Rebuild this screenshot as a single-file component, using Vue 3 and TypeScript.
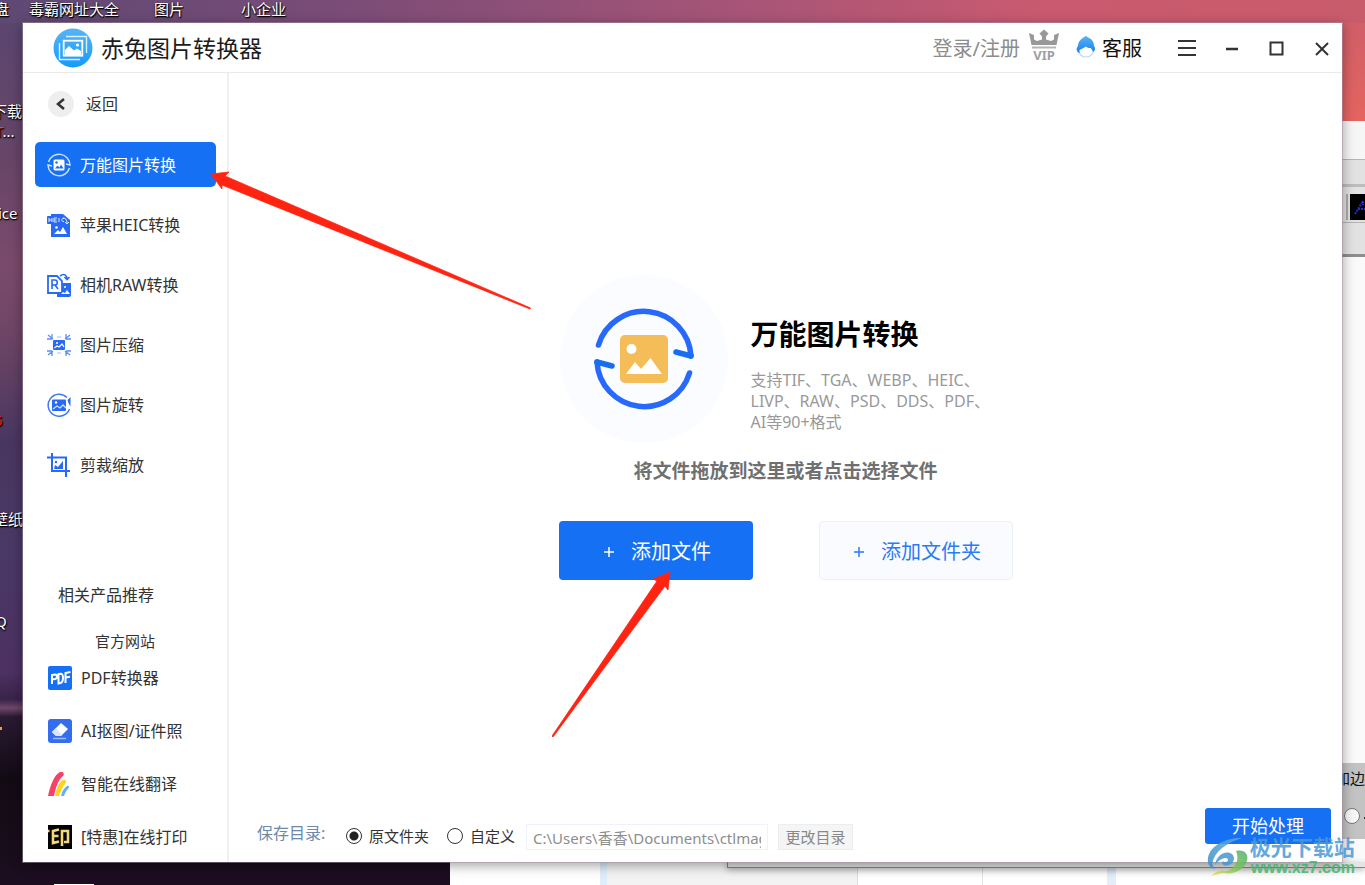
<script setup lang="ts">
import { ref } from 'vue'

interface Entry {
  id: string
  label: string
}

const tools: Entry[] = [
  { id: 'convert', label: '万能图片转换' },
  { id: 'heic', label: '苹果HEIC转换' },
  { id: 'raw', label: '相机RAW转换' },
  { id: 'compress', label: '图片压缩' },
  { id: 'rotate', label: '图片旋转' },
  { id: 'crop', label: '剪裁缩放' },
]

const products: Entry[] = [
  { id: 'pdf', label: 'PDF转换器' },
  { id: 'cutout', label: 'AI抠图/证件照' },
  { id: 'translate', label: '智能在线翻译' },
  { id: 'print', label: '[特惠]在线打印' },
]

const activeTool = ref('convert')
const saveMode = ref('source')
const savePath = ref('C:\\Users\\香香\\Documents\\ctlmage')
</script>

<template>
  <div class="desktop">
    <div class="backdrop" aria-hidden="true">
      <div class="rear-side">
        <div class="bar bar-title"></div>
        <div class="bar bar-menu"></div>
        <div class="bar bar-tools"><span class="swatch"><svg viewBox="0 0 15 26"><path d="M5 20 13 7M8 15h7M13 7v4" fill="none" stroke="#2a2ad0" stroke-width="2" stroke-dasharray="2 1" /></svg></span></div>
        <div class="bar bar-options"></div>
        <div class="rear-panel"><span class="rear-text">加边</span><span class="rear-radio"></span><span class="rear-dash"></span></div>
      </div>
      <div class="rear-bottom">
        <div class="rear-doc"></div>
        <div class="rear-dialog"></div>
        <div class="rear-edge"></div>
      </div>
      <span class="shortcut s1">盘</span>
      <span class="shortcut s2">毒霸网址大全</span>
      <span class="shortcut s3">图片</span>
      <span class="shortcut s4">小企业</span>
      <span class="shortcut s5">下载</span>
      <span class="shortcut s6"><b>T</b>...</span>
      <span class="shortcut s7">ice</span>
      <span class="shortcut s8">5</span>
      <span class="shortcut s9">壁纸</span>
      <span class="shortcut s10">Q</span>
      <span class="spark"></span>
      <span class="task-mark"></span>
    </div>

    <div class="window">
      <header class="titlebar">
        <svg class="logo" viewBox="0 0 40 40">
          <defs>
            <linearGradient id="logoFill" x1="0" y1="0" x2="0" y2="1">
              <stop offset="0" stop-color="#56b4f8" />
              <stop offset="1" stop-color="#149bfb" />
            </linearGradient>
          </defs>
          <circle cx="20" cy="20" r="19.5" fill="url(#logoFill)" />
          <path d="M13 8.500h20.500V25M6.500 15v16.500H27" fill="none" stroke="#d9f0ff" stroke-width="1.400" />
          <rect x="10.700" y="12.700" width="18.600" height="15" fill="none" stroke="#fff" stroke-width="1.800" />
          <path d="M12 22l4-4 5 4.500 3-2 4 2.500v4H12z" fill="#fff" />
          <circle cx="24.500" cy="17" r="1.600" fill="#fff" />
        </svg>
        <h1>赤兔图片转换器</h1>
        <div class="title-actions">
          <a href="#" class="login">登录/注册</a>
          <svg class="vip" viewBox="0 0 32 32">
            <path d="M1 4 6 6v4.500l3 1.500 5-1.500V7.500L11.500 4.500 16 .5l4.500 4L18 7.500v3l5 1.500 3-1.500V6l5-2-2.500 12h-25L1 4z" fill="#999" />
            <path d="M4 17.500h24v2H4z" fill="#b5b5b5" />
            <text x="16" y="31" text-anchor="middle" font-size="13" font-weight="700" fill="#a0a0a0">VIP</text>
          </svg>
          <a href="#" class="service">
            <svg viewBox="0 0 20 22">
              <defs>
                <linearGradient id="capFill" x1="0" y1="0" x2="0" y2="1">
                  <stop offset="0" stop-color="#55b4f0" />
                  <stop offset="1" stop-color="#1a80ee" />
                </linearGradient>
              </defs>
              <ellipse cx="10" cy="14" rx="7.500" ry="7" fill="#fff" stroke="#b9dcfa" stroke-width="1.200" />
              <path d="M10 0c1 1 2 1 3 2 3 1 5 4 5 8 2 2 1 5-1 6-.5-2-1.500-3-2.500-4-2 0-3.500-.5-4.500-1.500C8 12 5 13 3.500 14v3C0 16 0 12 2 10 2 5 6 2 10 0z" fill="url(#capFill)" />
            </svg>
            客服
          </a>
          <button class="win-btn" aria-label="菜单"><svg viewBox="0 0 20 20"><path d="M1 3h18M1 10h18M1 17h18" /></svg></button>
          <button class="win-btn" aria-label="最小化"><svg viewBox="0 0 20 20"><path d="M4 11h12" stroke-width="2.500" /></svg></button>
          <button class="win-btn" aria-label="最大化"><svg viewBox="0 0 20 20"><path d="M3.500 4.500h12v12h-12z" /></svg></button>
          <button class="win-btn" aria-label="关闭"><svg viewBox="0 0 20 20"><path d="m4 5 12 12M16 5 4 17" /></svg></button>
        </div>
      </header>

      <aside class="sidebar">
        <button class="back">
          <span class="back-disc"><svg viewBox="0 0 26 26"><path d="m16 8-6 5 6 5" fill="none" stroke="#333" stroke-width="2.500" /></svg></span>
          返回
        </button>

        <nav class="tools">
          <button
            v-for="tool in tools"
            :key="tool.id"
            class="tool"
            :class="{ active: tool.id === activeTool }"
            @click="activeTool = tool.id"
          >
            <svg v-if="tool.id === 'convert'" viewBox="0 0 24 24">
              <path d="M1.500 9A11 11 0 0 1 23 12l-4-1M22.500 15A11 11 0 0 1 1 12l4 1" fill="none" stroke="#cfe1ff" stroke-width="1.500" />
              <rect x="6.500" y="6.500" width="11" height="11" rx="1.500" fill="currentColor" />
              <circle cx="9.500" cy="9.500" r="1.200" fill="#1670f3" />
              <path d="m8 15.500 2.500-3 2 2 1.500-3 2.500 4z" fill="#1670f3" />
            </svg>
            <svg v-else-if="tool.id === 'heic'" viewBox="0 0 24 24">
              <path d="M4 1h12l7 6v17H4z" fill="#286af6" />
              <rect x="0" y="3" width="17" height="8" rx="1" fill="#286af6" />
              <path d="M2 5v4M2 7h3M5 5v4M10 5H7v4h3M7 7h2.500M12 5v4M17 5.500c-3-1-3 4 0 3M16 5c3 0 4 2 4 5M18 9l2 2 2-2" fill="none" stroke="#dce8ff" stroke-width="1" />
              <circle cx="9.500" cy="14.500" r="1.300" fill="#fff" />
              <path d="m7 21 4-4 2 2 3-5 4 7z" fill="#fff" />
            </svg>
            <svg v-else-if="tool.id === 'raw'" viewBox="0 0 24 24">
              <path d="M10 10h14v12a2 2 0 0 1-2 2H10z" fill="#286af6" />
              <path d="M1 3h9l5 5v12H1z" fill="#fff" stroke="#286af6" stroke-width="1.800" />
              <path d="M5 16V7h3c3 0 3 5 0 5H5m3 0 3 4M13 3c4-3 7-1 7 3M17.500 4 20 6.500 22.500 4" fill="none" stroke="#286af6" stroke-width="1.600" />
              <path d="m14 21 2-2 2 1 2-3 3 4z" fill="#fff" />
              <circle cx="18" cy="14" r="1" fill="#fff" />
            </svg>
            <svg v-else-if="tool.id === 'compress'" viewBox="0 0 24 24">
              <rect x="6" y="7" width="12" height="10" rx="1" fill="#286af6" />
              <path d="m7.500 15 2.500-2 2 1 3-3 2 3" fill="none" stroke="#fff" stroke-width="1.200" />
              <circle cx="10" cy="10" r="1" fill="#fff" />
              <path d="m1 2 5 4M5 1v4M0 6h5M23 2l-5 4M19 1v4M24 6h-5M1 22l5-4M5 23v-4M0 18h5M23 22l-5-4M19 23v-4M24 18h-5" fill="none" stroke="#5a8df8" stroke-width="1.300" />
              <path d="M10 4h4M10 20h4" stroke="#a4c0fb" />
            </svg>
            <svg v-else-if="tool.id === 'rotate'" viewBox="0 0 24 24">
              <path d="M20 4.500A11 11 0 1 0 22.500 16" fill="none" stroke="#3e78f6" stroke-width="1.500" />
              <path d="M23.500 4v9.500l-2-3.500-1-3z" fill="#286af6" />
              <rect x="5" y="6.500" width="14" height="11.500" rx="1" fill="#286af6" />
              <path d="m6 16 4-3 3 2 3-3 3 3" fill="none" stroke="#cfe0ff" stroke-width="1.300" />
              <circle cx="9" cy="9.500" r="1.200" fill="#fff" />
            </svg>
            <svg v-else viewBox="0 0 24 24">
              <path d="M5 0v18h18M0 4.500h19V24" fill="none" stroke="#286af6" stroke-width="2" />
              <path d="m7 16 1-4 3 2 5-6v8z" fill="#286af6" />
              <circle cx="9" cy="9" r="1.200" fill="#286af6" />
            </svg>
            <span>{{ tool.label }}</span>
          </button>
        </nav>

        <section class="related">
          <h2>相关产品推荐</h2>
          <a href="#" class="official">官方网站</a>
          <a v-for="product in products" :key="product.id" href="#" class="product">
            <svg v-if="product.id === 'pdf'" viewBox="0 0 24 24">
              <rect width="24" height="24" rx="2" fill="#1670f3" />
              <path d="M4 18V9l3-.5q2 0 2 2T7 13l-3 .5M10.500 17.500V8l2-.3q2.500 0 2.500 4.300t-2.500 5zM17.500 17V7l5-1M18 11.500l4-.8" fill="none" stroke="#fff" stroke-width="2" />
            </svg>
            <svg v-else-if="product.id === 'cutout'" viewBox="0 0 24 24">
              <rect width="24" height="24" rx="3" fill="#356df0" />
              <path d="m13 4 7 6-7 7H8l-4-4z" fill="#fff" />
              <path d="m4 13 4-4 6 7-1 1H8z" fill="#dbe5ff" />
              <path d="M5 19.500h13" stroke="#9db9fa" stroke-width="1.500" />
            </svg>
            <svg v-else-if="product.id === 'translate'" viewBox="0 0 24 24">
              <path d="M0 24C2 14 6 3 12 0c3-1 5 2 3 4C10 8 8 15 6 24z" fill="#f5426c" />
              <path d="M7 24c1-7 4-14 8-16 3-1 4 2 2 4-3 3-4 7-6 12z" fill="#ffd21c" />
              <path d="M13 24c1-5 3-8 6-10 2-1 3 1 1 3-2 2-3 4-4 7z" fill="#66b1ec" />
            </svg>
            <svg v-else viewBox="0 0 24 24">
              <rect width="24" height="24" fill="#000" />
              <path d="M11 4.500 5 6v12l6-1.500M5 11h5.500M14 21V6h6v11h-4M0 6h1.500" fill="none" stroke="#f3d77b" stroke-width="2.600" />
            </svg>
            <span>{{ product.label }}</span>
          </a>
        </section>
      </aside>

      <main class="content">
        <section class="drop-zone">
          <div class="intro">
            <svg class="emblem" viewBox="0 0 168 168">
              <circle cx="84" cy="84" r="84" fill="#fafcff" />
              <g fill="none" stroke-linecap="round" stroke-linejoin="round" stroke-width="5.500">
                <path d="M38.500 70A47.300 47.300 0 0 1 131 81M129.500 98A47.300 47.300 0 0 1 37 87" stroke="#2769fd" />
                <path d="m131 81-15-4M37 87l15 4" stroke="#176ff0" />
              </g>
              <rect x="60" y="60" width="48" height="48" rx="5" fill="#f5bd58" />
              <circle cx="71.500" cy="74" r="5" fill="#fff" />
              <path d="m66 99 9-12 6 7 9.500-11L102 99z" fill="#fff" />
            </svg>
            <div class="intro-text">
              <h2>万能图片转换</h2>
              <p>支持TIF、TGA、WEBP、HEIC、<br />LIVP、RAW、PSD、DDS、PDF、<br />AI等90+格式</p>
            </div>
          </div>
          <p class="hint">将文件拖放到这里或者点击选择文件</p>
          <div class="add-actions">
            <button class="add primary"><svg viewBox="0 0 12 12"><path d="M6 1v10M1 6h10" /></svg>添加文件</button>
            <button class="add secondary"><svg viewBox="0 0 12 12"><path d="M6 1v10M1 6h10" /></svg>添加文件夹</button>
          </div>
        </section>

        <footer class="save-bar">
          <div class="save-options">
            <span id="save-label" class="save-label">保存目录:</span>
            <div class="choices" role="radiogroup" aria-labelledby="save-label">
              <label><input v-model="saveMode" type="radio" name="save" value="source" />原文件夹</label>
              <label><input v-model="saveMode" type="radio" name="save" value="custom" />自定义</label>
            </div>
            <input v-model="savePath" class="path" type="text" aria-label="自定义" readonly />
            <button class="change">更改目录</button>
          </div>
          <button class="start">开始处理</button>
        </footer>
      </main>
    </div>

    <svg class="pointer pointer-nav" viewBox="0 0 322 140" aria-hidden="true">
      <path d="M1 4 19 2 15 6 320.500 138 320 139 12 15V19z" fill="#ff2412" stroke="#ff2412" stroke-width=".8" />
    </svg>
    <svg class="pointer pointer-add" viewBox="0 0 120 168" aria-hidden="true">
      <path d="M118 2 101 9 105 11 0 166 1 167 113 16 116 20z" fill="#ff2412" stroke="#ff2412" stroke-width=".8" />
    </svg>

    <div class="watermark">
      <svg viewBox="0 0 42 40">
        <defs>
          <linearGradient id="swirlBlue" x1="0" y1="1" x2="1" y2="0">
            <stop offset="0" stop-color="#3a8fc4" />
            <stop offset="1" stop-color="#5fa9dc" />
          </linearGradient>
          <linearGradient id="swirlGreen" x1="0" y1="1" x2="1" y2="0">
            <stop offset="0" stop-color="#f0de3c" />
            <stop offset=".5" stop-color="#7cc35a" />
            <stop offset="1" stop-color="#4fae6c" />
          </linearGradient>
        </defs>
        <path d="M35 1C17 1 3 9 1 21c-1 6 2 10 7 11-3-3-3-7-1-11C11 12 22 5 35 1z" fill="url(#swirlBlue)" />
        <path d="M8 28c1-8 8-14 15-12 6 2 5 10-1 12-5 2-8-1-6-4 1 2 5 1 5-1 0-4-8-2-13 5z" fill="#4598d0" />
        <path d="M29 14c8-2 13 3 11 10-3 9-14 14-23 12-4 0-9 2-13 3 5-5 9-6 14-5 10-1 15-11 11-20z" fill="url(#swirlGreen)" />
      </svg>
      <div class="watermark-text"><strong>极光下载站</strong><span>www.xz7.com</span></div>
    </div>
  </div>
</template>

<style>
html,
body {
  margin: 0;
  background: #1a0e1e;
}
</style>

<style scoped>
.desktop {
  position: relative;
  box-sizing: border-box;
  display: flex;
  min-height: 100vh;
  padding: 23px;
  overflow: hidden;
  color: #333;
  font: 16px/20px "Noto Sans", "Noto Sans CJK SC", sans-serif;
  background:
    linear-gradient(90deg, #5e4974 0, #7a4c77 25%, #a85577 55%, #c95a70 76%, #c95c6b 100%) top / 100% 23px no-repeat,
    linear-gradient(180deg, #cb5e6b 0, #e5645f 121px) right top / 23px 121px no-repeat,
    linear-gradient(180deg, #584670 0, #674568 18%, #7a4a6b 30%, #704666 37%, #493660 50%, #4a3866 62%, #4c3162 76%, #39234a 79%, #70466b 80%, #291a32 81%, #120b14 88%, #1c0e20 100%);
}
.desktop *,
.desktop *::before {
  box-sizing: border-box;
}
h1,
h2,
p {
  margin: 0;
  font-weight: 400;
}
a {
  color: inherit;
  text-decoration: none;
}
button,
input {
  margin: 0;
  padding: 0;
  border: 0;
  color: inherit;
  font: inherit;
}
button {
  background: none;
}
svg {
  flex: none;
}
.backdrop {
  position: absolute;
  inset: 0;
  overflow: hidden;
}
.shortcut {
  position: absolute;
  color: #fff;
  font-size: 15px;
  white-space: nowrap;
  text-shadow: 1px 1px 1px #000, 0 1px 2px #000;
}
.s1 { left: -6px; top: -1px; }
.s2 { left: 29px; top: -1px; }
.s3 { left: 154px; top: -1px; }
.s4 { left: 241px; top: -1px; }
.s5 { left: -8px; top: 101px; }
.s6 { left: -5px; top: 121px; }
.s6 b { color: #e0562a; font-weight: 400; }
.s7 { left: -2px; top: 203px; }
.s8 { left: -6px; top: 410px; color: #c01818; font-weight: 700; }
.s9 { left: -7px; top: 509px; }
.s10 { left: -5px; top: 611px; }
.spark {
  position: absolute;
  left: 0;
  top: 727px;
  width: 2px;
  height: 3px;
  background: #ff9a2a;
}
.task-mark {
  position: absolute;
  left: 54px;
  bottom: 0;
  width: 40px;
  height: 1px;
  background: #fff;
}
.rear-side {
  position: absolute;
  top: 121px;
  right: 0;
  bottom: 0;
  display: flex;
  flex-direction: column;
  width: 40px;
  background: #fafafa;
}
.bar {
  display: flex;
  flex: none;
  justify-content: flex-end;
  border-bottom: 1px solid #b5b5b5;
  background: #e2e2e2;
}
.bar-title { height: 39px; background: #f6f6f6; }
.bar-menu { height: 27px; border-bottom: 3px solid #bdbdbd; }
.bar-tools { height: 36px; padding-top: 7px; }
.bar-options { height: 34px; border-bottom: 3px solid #8e8e8e; }
.swatch {
  width: 19px;
  height: 26px;
  border-left: 2px solid #aaa;
  padding-left: 2px;
}
.swatch svg {
  display: block;
  width: 15px;
  height: 26px;
  background: #000;
}
.rear-panel {
  position: relative;
  height: 76px;
  margin-top: auto;
  margin-bottom: 46px;
  background: #c3c3c3;
}
.rear-text {
  position: absolute;
  right: 0;
  top: 5px;
  color: #111;
  font-size: 15px;
}
.rear-radio {
  position: absolute;
  right: 5px;
  top: 45px;
  width: 16px;
  height: 16px;
  border: 1px solid #777;
  border-radius: 50%;
  background: #f8f8f8;
}
.rear-dash {
  position: absolute;
  right: 0;
  top: 54px;
  width: 1px;
  height: 2px;
  background: #333;
}
.rear-bottom {
  position: absolute;
  left: 450px;
  right: 0;
  bottom: 0;
  display: flex;
  height: 23px;
  padding-left: 150px;
  background: #fff;
}
.rear-doc {
  width: 258px;
  border-left: 7px solid #dfeefa;
  border-right: 1px solid #d4e0eb;
  background: #f3f3f3;
}
.rear-dialog {
  width: 258px;
  border-right: 9px solid #e3eef9;
  background: linear-gradient(90deg, transparent 124px, #e3e3e3 124px, #e3e3e3 125px, transparent 125px);
}
.rear-edge {
  position: absolute;
  left: 277px;
  right: 0;
  top: 0;
  height: 6px;
  border-bottom: 1px solid #858585;
  border-left: 1px solid #858585;
  background: #e4e4e4;
  box-shadow: 0 2px 6px rgba(0, 0, 0, .3);
}
.window {
  position: relative;
  display: grid;
  flex: 1;
  grid-template: 50px 1fr / 206px 1fr;
  min-width: 0;
  background: #fff;
  box-shadow: 0 0 0 1px rgba(170, 150, 170, .5), 0 3px 12px rgba(0, 0, 0, .4);
}
.titlebar {
  display: flex;
  grid-column: 1 / -1;
  align-items: center;
  padding: 0 10px 0 30px;
  border-bottom: 1px solid #ebebeb;
}
.logo {
  width: 40px;
  height: 40px;
}
h1 {
  margin-left: 8px;
  color: #1c1c1c;
  font-size: 23px;
  line-height: 32px;
}
.title-actions {
  display: flex;
  align-items: center;
  margin-left: auto;
  font-size: 20px;
  line-height: 28px;
}
.login {
  padding-top: 3px;
  color: #8c8c8c;
}
.vip {
  width: 32px;
  height: 32px;
  margin: -6px 0 0 8px;
}
.service {
  display: flex;
  align-items: center;
  gap: 6px;
  margin: 0 35px 0 16px;
  padding-top: 3px;
  color: #111;
}
.service svg {
  width: 20px;
  height: 22px;
  margin-bottom: 4px;
}
.win-btn {
  display: grid;
  place-items: center;
  width: 20px;
  height: 32px;
}
.win-btn + .win-btn { margin-left: 25px; }
.win-btn svg {
  width: 20px;
  height: 20px;
  fill: none;
  stroke: #333;
  stroke-width: 2;
}
.sidebar {
  display: flex;
  flex-direction: column;
  padding: 18px 11px 13px 12px;
  border-right: 2px solid #f0f0f0;
}
.back {
  display: flex;
  align-items: center;
  gap: 12px;
  margin-left: 13px;
}
.back-disc {
  width: 26px;
  height: 26px;
  border-radius: 50%;
  background: #eee;
}
.back-disc svg {
  display: block;
  width: 26px;
  height: 26px;
}
.tools {
  display: flex;
  flex-direction: column;
  gap: 15px;
  margin-top: 25px;
}
.tool {
  display: flex;
  align-items: center;
  gap: 9px;
  height: 45px;
  padding-left: 12px;
  border-radius: 5px;
}
.tool.active {
  background: #1670f3;
  color: #fff;
}
.tool svg,
.product svg {
  width: 24px;
  height: 24px;
}
.related {
  display: flex;
  flex-direction: column;
  margin-top: auto;
  padding-left: 13px;
}
.related h2 {
  margin: 0 0 26px 10px;
  font-size: 16px;
}
.official {
  margin: 0 0 15px 47px;
  font-size: 15px;
}
.product {
  display: flex;
  align-items: center;
  gap: 9px;
  height: 24px;
  white-space: nowrap;
}
.product + .product { margin-top: 29px; }
.content {
  display: flex;
  flex-direction: column;
  min-width: 0;
}
.drop-zone {
  display: flex;
  flex: 1;
  flex-direction: column;
  align-items: center;
  justify-content: center;
}
.intro {
  display: flex;
  align-items: center;
  gap: 23px;
  width: 454px;
  padding-left: 1px;
}
.emblem {
  width: 168px;
  height: 168px;
}
.intro-text {
  padding-top: 30px;
  white-space: nowrap;
}
.intro h2 {
  color: #000;
  font-size: 28px;
  font-weight: 700;
  line-height: 36px;
}
.intro p {
  margin-top: 18px;
  color: #999;
  line-height: 21px;
}
.hint {
  margin-top: 14px;
  color: #707070;
  font-size: 19px;
  font-weight: 700;
  line-height: 28px;
}
.add-actions {
  display: flex;
  gap: 66px;
  margin-top: 36px;
}
.add {
  display: flex;
  align-items: center;
  justify-content: center;
  gap: 16px;
  width: 194px;
  height: 59px;
  padding: 2px 0 0 3px;
  border-radius: 4px;
  font-size: 20px;
}
.add svg {
  width: 12px;
  height: 12px;
  fill: none;
  stroke: currentColor;
  stroke-width: 1.5;
}
.primary {
  background: #1670f3;
  color: #fff;
}
.secondary {
  border: 1px solid #e9f1fa;
  background: #f9fbfe;
  color: #2a7bf4;
}
.save-bar {
  display: flex;
  align-items: flex-start;
  justify-content: space-between;
  height: 80px;
  padding: 26px 11px 0 28px;
}
.save-options {
  display: flex;
  align-items: flex-start;
  margin-top: 16px;
  font-size: 15px;
  line-height: 24px;
  white-space: nowrap;
}
.save-label {
  width: 89px;
  color: #6d88a8;
  font-size: 16px;
  line-height: 18px;
}
.choices {
  display: flex;
  gap: 18px;
  width: 180px;
}
.choices label {
  display: flex;
  align-items: center;
  gap: 7px;
}
.choices input {
  width: 16px;
  height: 16px;
  border: 1px solid #333;
  border-radius: 50%;
  background: #fff;
  appearance: none;
}
.choices input:checked {
  background: radial-gradient(circle, #222 0 4px, #fff 5px);
}
.path {
  width: 242px;
  height: 26px;
  padding: 0 6px;
  border: 1px solid #eef3f9;
  background: #fff;
  color: #8d8d8d;
}
.change {
  width: 75px;
  height: 26px;
  margin-left: 10px;
  border: 1px solid #e9eef3;
  background: #f5f5f5;
  color: #888;
}
.start {
  width: 126px;
  height: 36px;
  border-radius: 3px;
  background: #1670f3;
  color: #fff;
  font-size: 18px;
}
.pointer {
  position: absolute;
  pointer-events: none;
}
.pointer-nav {
  left: 210px;
  top: 170px;
  width: 322px;
  height: 140px;
}
.pointer-add {
  left: 552px;
  top: 570px;
  width: 120px;
  height: 168px;
}
.watermark {
  position: absolute;
  right: 10px;
  bottom: 7px;
  display: flex;
  align-items: center;
  gap: 1px;
  opacity: .85;
  pointer-events: none;
}
.watermark svg {
  width: 42px;
  height: 40px;
}
.watermark-text {
  display: flex;
  flex-direction: column;
  color: #4a9ad8;
  font-size: 21px;
  line-height: 22px;
}
.watermark-text span {
  padding-left: 1px;
  color: #45b56b;
  font: 700 16px/20px "Liberation Sans", sans-serif;
}
</style>
